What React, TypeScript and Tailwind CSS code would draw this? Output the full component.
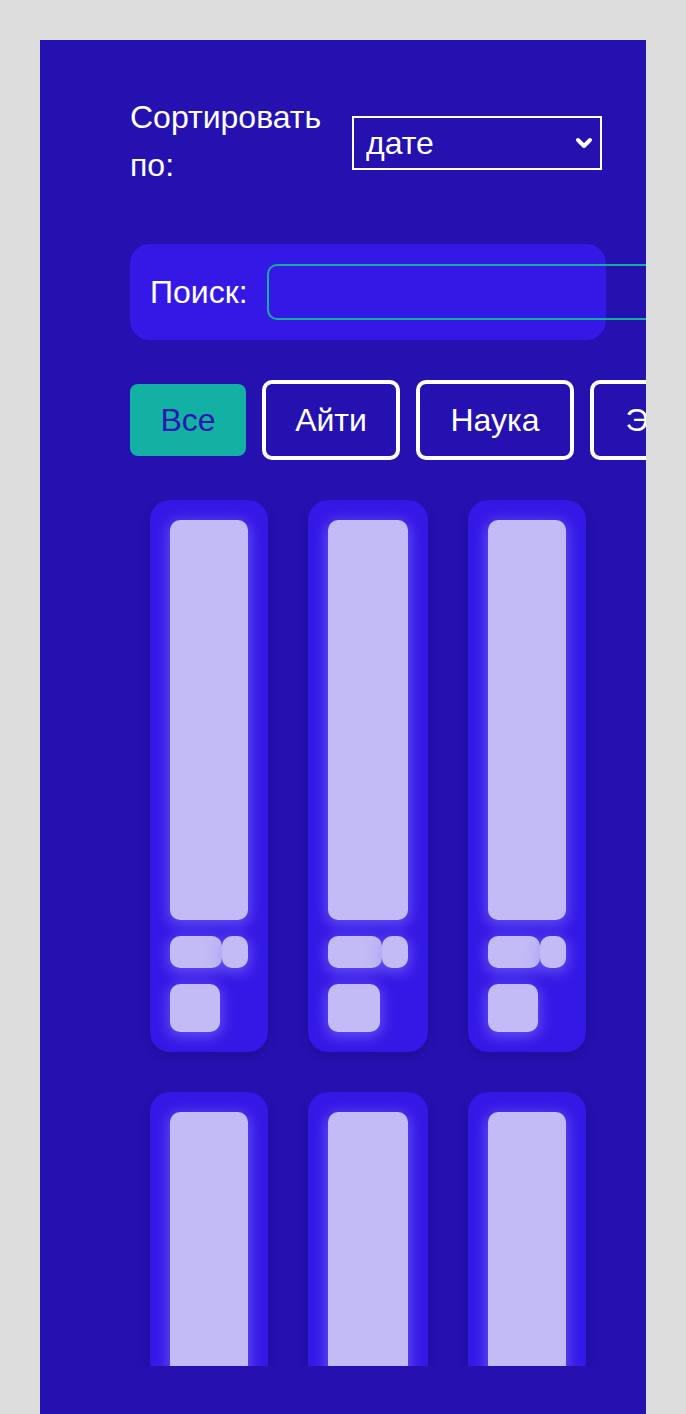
import { ChevronDown } from 'lucide-react';

const cols = [
  { card: 'w-[118px]', bar: 'w-[78px]', pill: 'w-[52px]', sq: 'w-[50px]' },
  { card: 'w-[120px]', bar: 'w-[80px]', pill: 'w-[54px]', sq: 'w-[52px]' },
  { card: 'w-[118px]', bar: 'w-[78px]', pill: 'w-[52px]', sq: 'w-[50px]' },
];

const glow = 'bg-[#c2bbf5] shadow-[0_3px_14px_2px_rgba(150,130,255,0.5)]';

const tags = [
  { name: 'Айти', w: 'w-[138px]' },
  { name: 'Наука', w: 'w-[158px]' },
  { name: 'Экономика', w: 'w-[234px]' },
  { name: 'Культура', w: 'w-[204px]' },
];

function SkeletonCard({ c }: { c: (typeof cols)[number] }) {
  return (
    <div
      className={`${c.card} rounded-[20px] bg-[#3419e6] p-5 shadow-[0_4px_10px_rgba(0,0,0,0.15)]`}
    >
      <div className={`${c.bar} h-[400px] rounded-[10px] ${glow}`} />
      <div className="mt-4 flex">
        <div className={`${c.pill} h-8 rounded-[10px] ${glow}`} />
        <div className={`w-[26px] h-8 rounded-[10px] ${glow}`} />
      </div>
      <div className={`${c.sq} mt-4 h-12 rounded-[10px] ${glow}`} />
    </div>
  );
}

export default function App() {
  return (
    <div className="min-h-screen bg-[#dddddd] px-10 pt-10 font-['Liberation_Sans',Arial,sans-serif]">
      <div className="overflow-hidden bg-[#2411b0] pl-[90px] pr-10 pt-[53px] pb-12 text-white">
        <div className="flex items-center">
          <label className="w-[200px] text-[32px] leading-[48px]">Сортировать по:</label>
          <div className="relative ml-[22px] mt-1 w-[250px]">
            <select className="h-[54px] w-full appearance-none border-2 border-white bg-transparent pl-3 text-[32px] text-white outline-none">
              <option className="text-black">дате</option>
              <option className="text-black">названию</option>
            </select>
            <ChevronDown
              className="pointer-events-none absolute right-[6px] top-[15px] h-6 w-6"
              strokeWidth={4}
            />
          </div>
        </div>

        <div className="mt-[55px] flex h-24 items-center rounded-[20px] bg-[#3419e6] px-5">
          <span className="text-[32px]">Поиск:</span>
          <input
            type="text"
            className="ml-[19px] h-14 w-[420px] shrink-0 rounded-[10px] border-2 border-[#16ad9f] bg-transparent px-3 text-[24px] text-white outline-none"
          />
        </div>

        <div className="mt-10 flex items-center gap-4 whitespace-nowrap">
          <button className="w-[116px] shrink-0 rounded-[8px] bg-[#13b1a3] py-[18px] text-center text-[32px] leading-9 text-[#2a17b5]">
            Все
          </button>
          {tags.map((t) => (
            <button
              key={t.name}
              className={`${t.w} shrink-0 rounded-[10px] border-4 border-white py-[18px] text-center text-[32px] leading-9 text-white`}
            >
              {t.name}
            </button>
          ))}
        </div>

        <div className="mt-10 h-[866px] overflow-hidden">
          <div className="grid w-[476px] grid-cols-3 justify-items-center gap-y-10">
            {[0, 1].map((row) =>
              cols.map((c, i) => <SkeletonCard key={`${row}-${i}`} c={c} />)
            )}
          </div>
        </div>
      </div>
    </div>
  );
}
